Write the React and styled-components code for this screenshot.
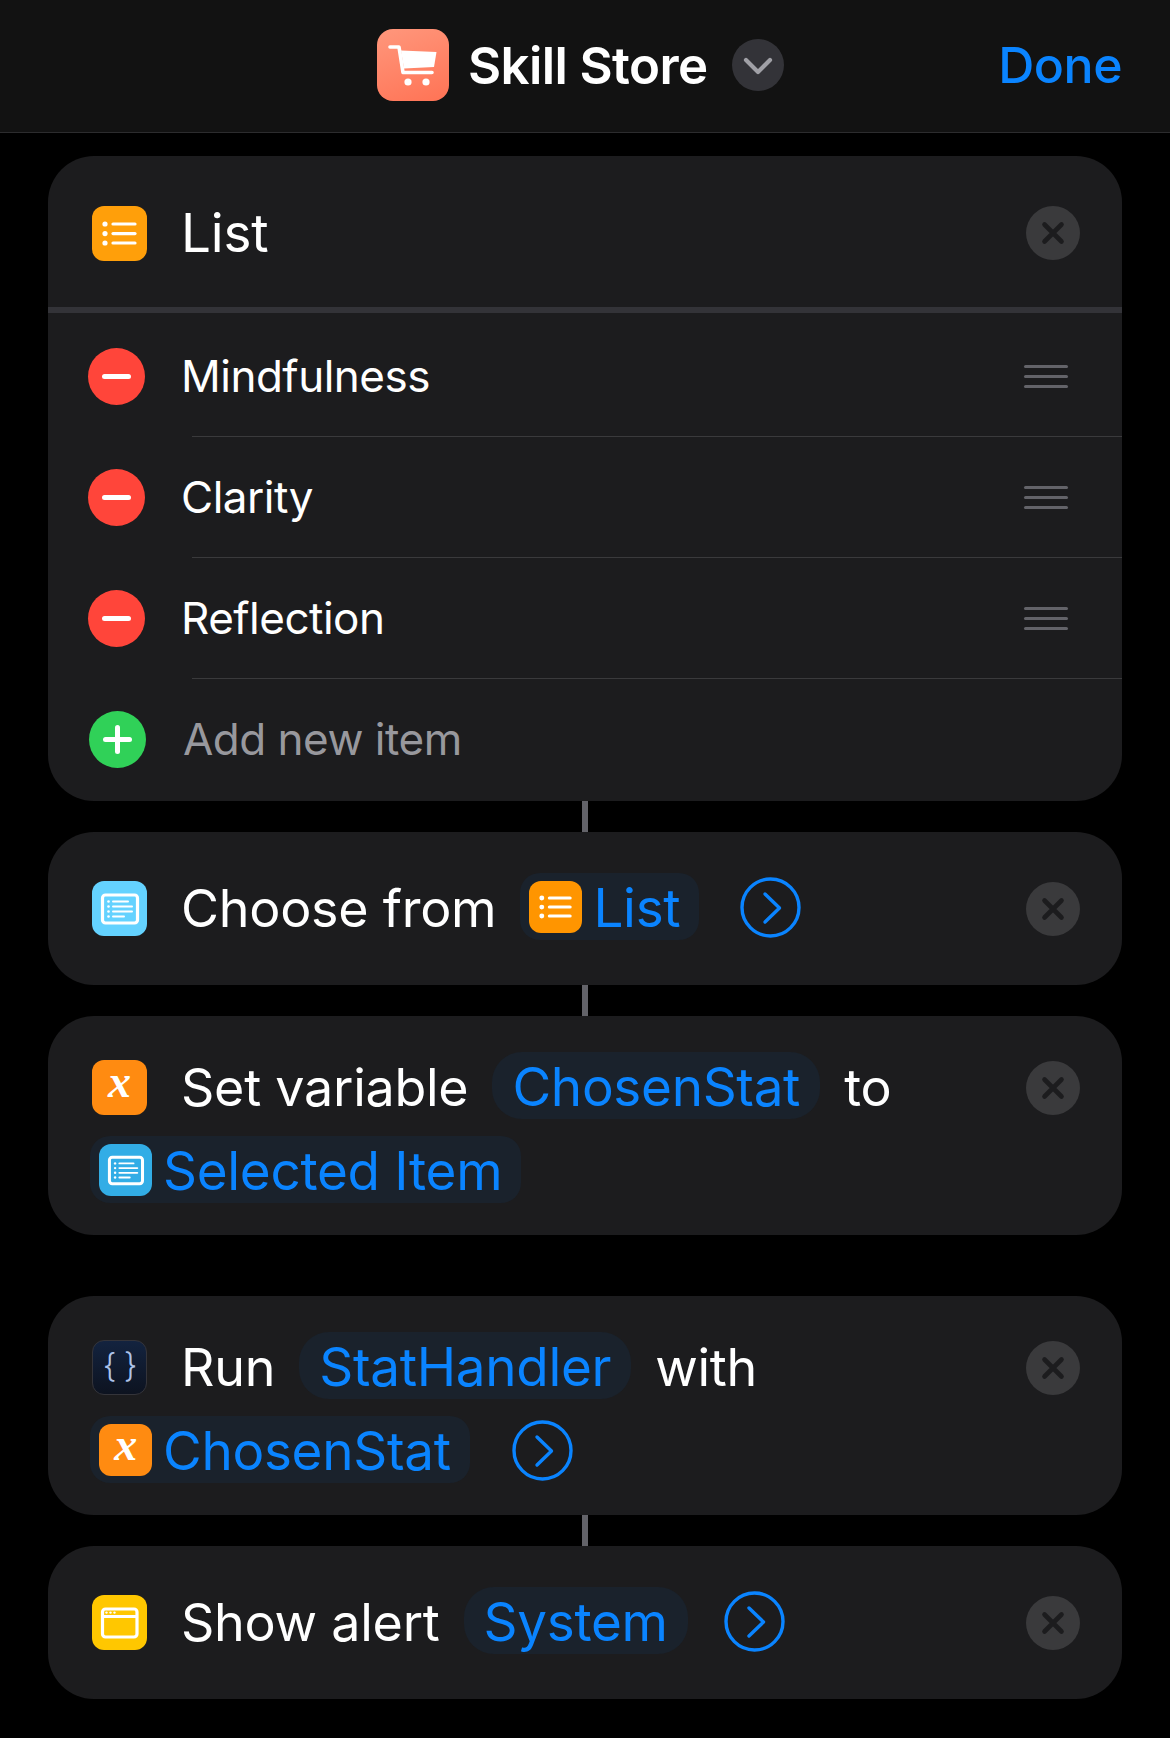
import styled, { createGlobalStyle } from "styled-components";

const BLUE = "#0a84ff";

const GlobalStyle = createGlobalStyle`
	html, body {
		margin: 0;
		padding: 0;
		background: #000;
	}
	body {
		font-family: Inter, "Liberation Sans", sans-serif;
		color: #fff;
	}
`;

const ListGlyph = () => (
	<svg viewBox="0 0 55 55" width="100%" height="100%">
		<g fill="#fff">
			<circle cx="13" cy="18" r="2.6" />
			<circle cx="13" cy="27.6" r="2.6" />
			<circle cx="13" cy="37" r="2.6" />
		</g>
		<g stroke="#fff" strokeWidth="3.2" strokeLinecap="round">
			<path d="M21 18H43" />
			<path d="M21 27.6H43" />
			<path d="M21 37H43" />
		</g>
	</svg>
);

const SelectGlyph = () => (
	<svg viewBox="0 0 55 55" width="100%" height="100%">
		<rect x="10.5" y="14" width="35" height="28" rx="3" fill="none" stroke="#fff" strokeWidth="3.2" />
		<g fill="#fff">
			<circle cx="16.5" cy="20.5" r="1.3" />
			<circle cx="16.5" cy="25.5" r="1.3" />
			<circle cx="16.5" cy="30.5" r="1.3" />
			<circle cx="16.5" cy="35.5" r="1.3" />
		</g>
		<g stroke="#fff" strokeWidth="2" strokeLinecap="round">
			<path d="M21 20.5H36" />
			<path d="M21 25.5H40" />
			<path d="M21 30.5H40" />
			<path d="M21 35.5H32" />
		</g>
	</svg>
);

const WindowGlyph = () => (
	<svg viewBox="0 0 55 55" width="100%" height="100%">
		<rect x="10.5" y="14" width="34.5" height="28" rx="3" fill="none" stroke="#fff" strokeWidth="3.2" />
		<path d="M10 21.5H45" stroke="#fff" strokeWidth="2.8" />
		<g fill="#fff">
			<circle cx="14.5" cy="17.6" r="1.2" />
			<circle cx="18.5" cy="17.6" r="1.2" />
			<circle cx="22.5" cy="17.6" r="1.2" />
		</g>
	</svg>
);

const CartGlyph = () => (
	<svg viewBox="0 0 72 72" width="72" height="72">
		<path d="M13 18H22L26 43.5H55" fill="none" stroke="#fff" strokeWidth="3.6" strokeLinecap="round" strokeLinejoin="round" />
		<path d="M24 21.5L59.5 23L57 38L27 39.5Z" fill="#fff" />
		<circle cx="31" cy="53" r="3.6" fill="#fff" />
		<circle cx="49" cy="53" r="3.6" fill="#fff" />
	</svg>
);

const CloseGlyph = () => (
	<svg viewBox="0 0 54 54" width="54" height="54">
		<path d="M18.5 18.5L35.5 35.5M35.5 18.5L18.5 35.5" stroke="#1c1c1e" strokeWidth="4.6" strokeLinecap="round" />
	</svg>
);

const ChevronCircle = () => (
	<svg viewBox="0 0 61 61" width="61" height="61">
		<circle cx="30.5" cy="30.5" r="28.5" fill="none" stroke={BLUE} strokeWidth="3.4" />
		<path d="M25 17L39.5 31L25 45" fill="none" stroke={BLUE} strokeWidth="3.4" strokeLinecap="round" strokeLinejoin="round" />
	</svg>
);

const DownChevron = () => (
	<svg viewBox="0 0 52 52" width="52" height="52">
		<path d="M14 21L26 33L38 21" fill="none" stroke="#a0a0a6" strokeWidth="4.2" strokeLinecap="round" strokeLinejoin="round" />
	</svg>
);

const App = () => (
	<Page>
		<GlobalStyle />
		<TopBar>
			<TitleGroup>
				<Logo>
					<CartGlyph />
				</Logo>
				<Title>Skill Store</Title>
				<TitleChevron>
					<DownChevron />
				</TitleChevron>
			</TitleGroup>
			<Done>Done</Done>
		</TopBar>

		<Flow>
			<Card>
				<ListHeader>
					<ActionIcon $bg="#ff9f0a">
						<ListGlyph />
					</ActionIcon>
					<ListTitle>List</ListTitle>
					<CloseButton $flat>
						<CloseGlyph />
					</CloseButton>
				</ListHeader>
				<ThickDivider />
				<ListRow item="Mindfulness" />
				<RowLine />
				<ListRow item="Clarity" />
				<RowLine />
				<ListRow item="Reflection" />
				<RowLine />
				<AddRow>
					<RoundSign $bg="#30d158">
						<PlusMark />
					</RoundSign>
					<AddLabel>Add new item</AddLabel>
				</AddRow>
			</Card>

			<Connector />

			<Card>
				<ActionBody $single>
					<Lines>
						<Line>
							<LeadIcon $bg="#64d2ff">
								<SelectGlyph />
							</LeadIcon>
							<Label $first>Choose from</Label>
							<Pill $withIcon>
								<PillIcon $bg="#ff9500">
									<ListGlyph />
								</PillIcon>
								<PillText>List</PillText>
							</Pill>
							<More $gap={17}>
								<ChevronCircle />
							</More>
						</Line>
					</Lines>
					<CloseButton>
						<CloseGlyph />
					</CloseButton>
				</ActionBody>
			</Card>

			<Connector />

			<Card>
				<ActionBody>
					<Lines>
						<Line>
							<LeadIcon $bg="#ff8b11">
								<VarX>x</VarX>
							</LeadIcon>
							<Label $first>Set variable</Label>
							<Pill>
								<PillText>ChosenStat</PillText>
							</Pill>
							<Label>to</Label>
						</Line>
						<Line $second>
							<Pill $withIcon>
								<PillIcon $bg="#32ade6">
									<SelectGlyph />
								</PillIcon>
								<PillText>Selected Item</PillText>
							</Pill>
						</Line>
					</Lines>
					<CloseButton>
						<CloseGlyph />
					</CloseButton>
				</ActionBody>
			</Card>

			<Spacer />

			<Card>
				<ActionBody>
					<Lines>
						<Line>
							<ScriptIcon>{"{ }"}</ScriptIcon>
							<Label $first>Run</Label>
							<Pill>
								<PillText>StatHandler</PillText>
							</Pill>
							<Label>with</Label>
						</Line>
						<Line $second>
							<Pill $withIcon>
								<PillIcon $bg="#ff8b11">
									<VarX>x</VarX>
								</PillIcon>
								<PillText>ChosenStat</PillText>
							</Pill>
							<More $gap={18}>
								<ChevronCircle />
							</More>
						</Line>
					</Lines>
					<CloseButton>
						<CloseGlyph />
					</CloseButton>
				</ActionBody>
			</Card>

			<Connector />

			<Card>
				<ActionBody $single>
					<Lines>
						<Line>
							<LeadIcon $bg="#ffc700">
								<WindowGlyph />
							</LeadIcon>
							<Label $first>Show alert</Label>
							<Pill>
								<PillText>System</PillText>
							</Pill>
							<More $gap={12}>
								<ChevronCircle />
							</More>
						</Line>
					</Lines>
					<CloseButton>
						<CloseGlyph />
					</CloseButton>
				</ActionBody>
			</Card>
		</Flow>
	</Page>
);

const ListRow = ({ item }) => (
	<ItemRow>
		<RoundSign $bg="#ff453a">
			<MinusMark />
		</RoundSign>
		<ItemLabel>{item}</ItemLabel>
		<Grip>
			<span />
			<span />
			<span />
		</Grip>
	</ItemRow>
);

export default App;

const Page = styled.div`
	width: 1170px;
	height: 1738px;
	background: #000;
	overflow: hidden;
`;

const TopBar = styled.header`
	display: flex;
	align-items: center;
	box-sizing: border-box;
	height: 133px;
	padding: 0 48px 2px 377px;
	background: #121212;
	border-bottom: 1px solid #2c2c2e;
`;

const TitleGroup = styled.div`
	display: flex;
	align-items: center;
`;

const Logo = styled.div`
	width: 72px;
	height: 72px;
	border-radius: 16px;
	background: linear-gradient(160deg, #ff977c, #ff7355);
`;

const Title = styled.div`
	margin-left: 19px;
	font-size: 51px;
	font-weight: 600;
	letter-spacing: -0.6px;
	white-space: nowrap;
`;

const TitleChevron = styled.div`
	width: 52px;
	height: 52px;
	margin-left: 24px;
	border-radius: 50%;
	background: #333338;
`;

const Done = styled.div`
	margin-left: auto;
	font-size: 50px;
	font-weight: 500;
	letter-spacing: -0.5px;
	color: ${BLUE};
`;

const Flow = styled.main`
	display: flex;
	flex-direction: column;
	padding: 23px 48px 0;
`;

const Card = styled.section`
	background: #1c1c1e;
	border-radius: 46px;
`;

const Connector = styled.div`
	width: 6px;
	height: 31px;
	margin-left: 534px;
	background: #636369;
`;

const Spacer = styled.div`
	height: 61px;
`;

const ListHeader = styled.div`
	display: flex;
	align-items: center;
	box-sizing: border-box;
	height: 151px;
	padding: 3px 42px 0 44px;
`;

const ListTitle = styled.div`
	margin-left: 34px;
	font-size: 53px;
	letter-spacing: -0.2px;
`;

const ThickDivider = styled.div`
	height: 6px;
	margin-bottom: 3px;
	background: #333338;
`;

const ItemRow = styled.div`
	display: flex;
	align-items: center;
	height: 120px;
	padding: 0 54px 0 40px;
`;

const AddRow = styled(ItemRow)`
	padding-left: 41px;
	padding-bottom: 2px;
`;

const RowLine = styled.div`
	height: 1px;
	margin-left: 144px;
	background: #3a3a3c;
`;

const RoundSign = styled.div`
	display: flex;
	align-items: center;
	justify-content: center;
	flex: none;
	width: 57px;
	height: 57px;
	border-radius: 50%;
	background: ${(props) => props.$bg};
`;

const MinusMark = styled.div`
	width: 29px;
	height: 5px;
	border-radius: 3px;
	background: #fff;
`;

const PlusMark = styled(MinusMark)`
	position: relative;
	&::after {
		content: "";
		position: absolute;
		left: 12px;
		top: -12px;
		width: 5px;
		height: 29px;
		border-radius: 3px;
		background: #fff;
	}
`;

const ItemLabel = styled.div`
	margin-left: 36px;
	font-size: 44px;
	letter-spacing: -0.5px;
`;

const AddLabel = styled(ItemLabel)`
	color: #98989d;
	margin-left: 37px;
`;

const Grip = styled.div`
	display: flex;
	flex-direction: column;
	gap: 7px;
	width: 44px;
	margin-left: auto;
	& > span {
		display: block;
		height: 3px;
		border-radius: 2px;
		background: #636369;
	}
`;

const ActionBody = styled.div`
	display: flex;
	align-items: flex-start;
	padding: ${(props) => (props.$single ? "41px 42px 45px 44px" : "36px 42px 32px 44px")};
`;

const Lines = styled.div`
	display: flex;
	flex-direction: column;
	gap: 17px;
	flex: 1;
	min-width: 0;
`;

const Line = styled.div`
	display: flex;
	align-items: center;
	gap: 24px;
	height: 67px;
	margin-left: ${(props) => (props.$second ? "-2px" : "0")};
	white-space: nowrap;
`;

const ActionIcon = styled.div`
	display: flex;
	align-items: center;
	justify-content: center;
	flex: none;
	width: 55px;
	height: 55px;
	border-radius: 12px;
	background: ${(props) => props.$bg};
`;

const LeadIcon = styled(ActionIcon)`
	margin-top: 3px;
`;

const ScriptIcon = styled(LeadIcon)`
	box-sizing: border-box;
	border: 1px solid #34343a;
	background: linear-gradient(#13233f, #0d1320);
	color: #adc3ea;
	font-size: 33px;
	font-weight: 300;
	line-height: 1;
	padding-bottom: 4px;
	white-space: pre;
	letter-spacing: -1px;
`;

const VarX = styled.span`
	font-family: "Liberation Serif", serif;
	font-style: italic;
	font-weight: 700;
	font-size: 46px;
	line-height: 1;
	color: #fff;
	padding-bottom: 10px;
`;

const Label = styled.div`
	margin-left: ${(props) => (props.$first ? "10px" : "0")};
	padding-top: 3px;
	font-size: 52px;
	letter-spacing: -0.25px;
`;

const Pill = styled.div`
	display: flex;
	align-items: center;
	gap: 11px;
	height: 67px;
	padding: ${(props) => (props.$withIcon ? "0 19px 0 9px" : "0 20px")};
	border-radius: ${(props) => (props.$withIcon ? "20px" : "30px")};
	background: #1a222c;
	color: ${BLUE};
	font-size: 53px;
	letter-spacing: -0.3px;
`;

const PillText = styled.span`
	margin-top: 3px;
`;

const PillIcon = styled(ActionIcon)`
	width: 53px;
	height: 52px;
`;

const More = styled.div`
	display: flex;
	flex: none;
	width: 61px;
	height: 61px;
	margin-top: 2px;
	margin-left: ${(props) => props.$gap}px;
`;

const CloseButton = styled.div`
	display: flex;
	flex: none;
	width: 54px;
	height: 54px;
	margin-left: auto;
	margin-top: ${(props) => (props.$flat ? "0" : "9px")};
	border-radius: 50%;
	background: #3a3a3c;
`;
